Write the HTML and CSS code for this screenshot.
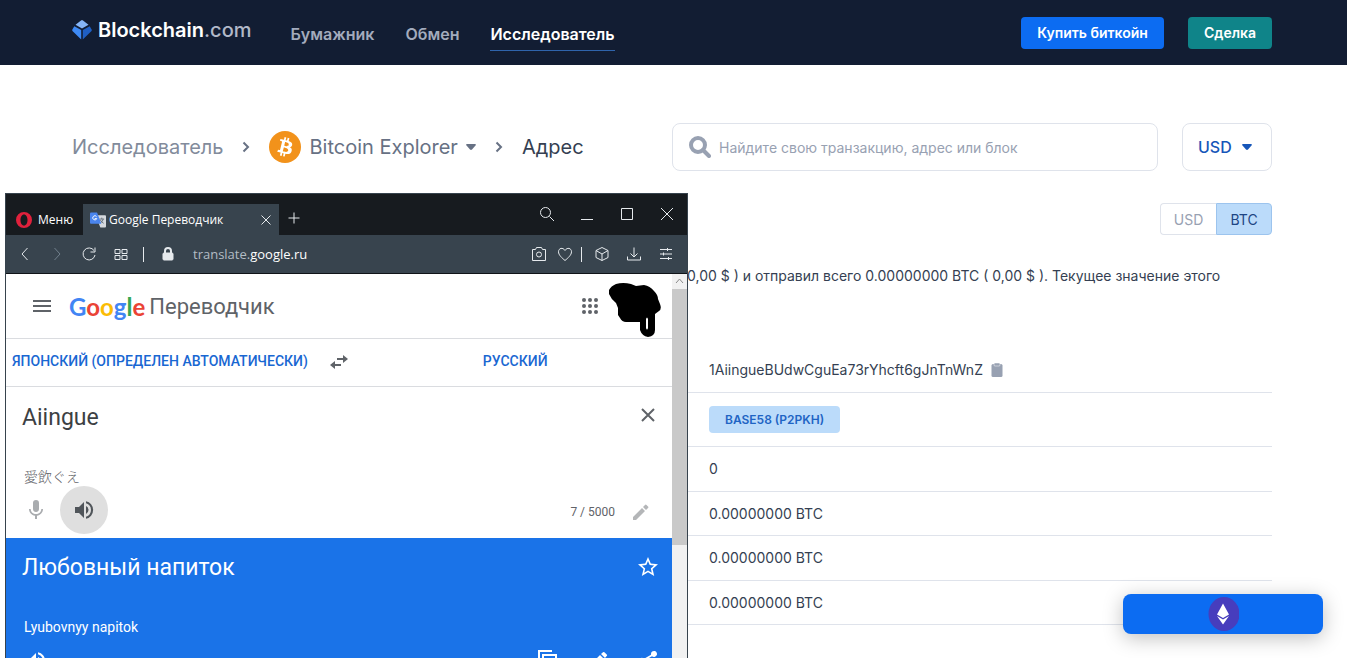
FILE: index.html
```html
<!DOCTYPE html>
<html lang="ru">
<head>
<meta charset="utf-8">
<title>Blockchain.com</title>
<link rel="stylesheet" href="styles.css">
</head>
<body>
<header class="topbar">
  <a class="brand" href="#">
    <svg class="brand-mark" viewBox="0 0 20 20" aria-hidden="true">
      <path fill="#85b5f8" d="M9 .5q1-.8 2 0l5.500 4.300L10 8.600 3.500 4.800z"/>
      <path fill="#3d89f5" d="M2.300 6.200 9.200 10v9.500L.7 11.300q-1-1 0-2.200z"/>
      <path fill="#1f5fc4" d="M17.700 6.200 10.800 10v9.500l8.500-8.200q1-1 0-2.200z"/>
    </svg>
    <span>Blockchain<span class="brand-tld">.com</span></span>
  </a>
  <nav class="nav">
    <a href="#">Бумажник</a>
    <a href="#">Обмен</a>
    <a class="is-active" href="#">Исследователь</a>
  </nav>
  <div class="actions">
    <button class="btn btn-blue" type="button">Купить биткойн</button>
    <button class="btn btn-teal" type="button">Сделка</button>
  </div>
</header>

<main class="page">
  <div class="tools">
    <nav class="crumbs">
      <a class="crumb-root" href="#">Исследователь</a>
      <svg class="chevron" viewBox="0 0 8 12" aria-hidden="true"><path d="M1.500 1.500 6 6l-4.500 4.500"/></svg>
      <a class="crumb-coin" href="#">
        <svg class="coin" viewBox="0 0 32 32" aria-hidden="true">
          <circle cx="16" cy="16" r="16" fill="#f2921b"/>
          <path fill="#fff" fill-rule="evenodd" d="M23.200 14c.3-2.100-1.300-3.200-3.500-4l.7-2.800-1.700-.4-.7 2.700-1.400-.3.700-2.800-1.700-.4-.7 2.800-3.500-.9-.4 1.800s1.300.3 1.200.3c.7.200.8.600.8 1l-1.900 7.700c-.1.200-.3.500-.8.400l-1.200-.3-.9 2 3.400.8-.7 2.900 1.700.4.7-2.800 1.400.3-.7 2.800 1.700.4.700-2.800c3 .6 5.200.3 6.100-2.300.8-2.200 0-3.400-1.600-4.200 1.200-.3 2-1 2.300-2.300zm-4 5.600c-.5 2.200-4.200 1-5.400.7l1-3.900c1.200.3 5 .9 4.400 3.200zm.5-5.600c-.5 1.900-3.600.9-4.500.7l.9-3.600c1 .3 4.200.7 3.600 2.900z"/>
        </svg>
        <span>Bitcoin Explorer</span>
        <svg class="caret" viewBox="0 0 10 6" aria-hidden="true"><path d="M1 0h8q1.500.3.500 1.500L6 5.500q-1 .8-2 0L.5 1.500Q-.5.300 1 0z"/></svg>
      </a>
      <svg class="chevron" viewBox="0 0 8 12" aria-hidden="true"><path d="M1.500 1.500 6 6l-4.500 4.500"/></svg>
      <span class="crumb-here">Адрес</span>
    </nav>
    <label class="search">
      <svg class="search-icon" viewBox="0 0 22 22" aria-hidden="true"><circle cx="9" cy="9" r="7"/><path d="m14 14 6 6"/></svg>
      <input type="search" aria-label="Поиск" placeholder="Найдите свою транзакцию, адрес или блок">
    </label>
    <button class="currency" type="button">USD
      <svg class="caret" viewBox="0 0 10 6" aria-hidden="true"><path d="M1 0h8q1.500.3.500 1.500L6 5.500q-1 .8-2 0L.5 1.500Q-.5.300 1 0z"/></svg>
    </button>
  </div>

  <div class="units">
    <button class="unit" type="button">USD</button>
    <button class="unit is-on" type="button">BTC</button>
  </div>

  <p class="summary">0,00 $ ) и отправил всего 0.00000000 BTC ( 0,00 $ ). Текущее значение этого</p>

  <table class="details">
    <tbody>
      <tr><td class="gap"></td><td><span class="address">1AiingueBUdwCguEa73rYhcft6gJnTnWnZ
        <svg class="clip" viewBox="0 0 12 14" aria-hidden="true"><rect x="0.500" y="1" width="11" height="13" rx="1.500"/><rect class="clip-top" x="3" y="0" width="6" height="3" rx="1"/></svg></span></td></tr>
      <tr class="tall"><td class="gap"></td><td><span class="tag">BASE58 (P2PKH)</span></td></tr>
      <tr><td class="gap"></td><td>0</td></tr>
      <tr><td class="gap"></td><td>0.00000000 BTC</td></tr>
      <tr><td class="gap"></td><td>0.00000000 BTC</td></tr>
      <tr><td class="gap"></td><td>0.00000000 BTC</td></tr>
    </tbody>
  </table>
</main>

<button class="float-cta" type="button" aria-label="Ethereum">
  <svg viewBox="0 0 32 34" aria-hidden="true">
    <ellipse cx="17" cy="17" rx="15.500" ry="17" fill="#473dbd"/>
    <path fill="#fff" d="M16 6.500 22 17.500l-6 3.500-6-3.500zM10 19l6 3.500 6-3.500-6 8.500z"/>
  </svg>
</button>

<section class="window" aria-label="Google Переводчик">
  <div class="titlebar">
    <button class="opera" type="button">
      <svg viewBox="0 0 16 16" aria-hidden="true"><path fill="#e0213c" fill-rule="evenodd" d="M8 0a8 8 0 1 0 0 16A8 8 0 1 0 8 0zm0 2.500c2.200 0 3.500 2.500 3.500 5.500S10.200 13.500 8 13.500 4.500 11 4.500 8 5.800 2.500 8 2.500z"/></svg>
      <span>Меню</span>
    </button>
    <div class="tab">
      <svg class="tab-icon" viewBox="0 0 17 16" aria-hidden="true">
        <path fill="#d5d9de" d="M6 3h10q1 0 1 1v11q0 1-1 1h-5z"/>
        <path fill="none" stroke="#66717c" d="M10 7h5M12.500 5.500V7M14 7q-.5 3-3 4M11 8q1.500 2.500 3.500 3.500"/>
        <path fill="#4a85ee" d="M1 0h6.500L12 12H1q-1 0-1-1V1q0-1 1-1z"/>
        <path fill="none" stroke="#fff" d="M7 4.500A2.200 2.200 0 1 0 7.200 6.500H5"/>
      </svg>
      <span class="tab-name">Google Переводчик</span>
      <svg class="tab-close line" viewBox="0 0 12 12" aria-hidden="true"><path d="m1.500 1.500 9 9m0-9-9 9"/></svg>
    </div>
    <button class="tab-add" type="button" aria-label="Новая вкладка"><svg class="line" viewBox="0 0 12 12"><path d="M6 .5v11M.5 6h11"/></svg></button>
    <div class="win-controls">
      <svg class="line" viewBox="0 0 16 16"><circle cx="6.500" cy="6.500" r="5"/><path d="m10.500 10.500 4.500 4.500"/></svg>
      <svg class="line" viewBox="0 0 16 16"><path d="M2 13.500h12"/></svg>
      <svg class="line" viewBox="0 0 16 16"><path d="M2.500 2.500h11v11h-11z"/></svg>
      <svg class="line" viewBox="0 0 16 16"><path d="m2 2 12 12m0-12L2 14"/></svg>
    </div>
  </div>

  <div class="toolbar">
    <div class="tool-left">
      <svg class="line" viewBox="0 0 16 16"><path d="M10.500 2 5 8l5.500 6"/></svg>
      <svg class="line dim" viewBox="0 0 16 16"><path d="M5.500 2 11 8l-5.500 6"/></svg>
      <svg class="line" viewBox="0 0 16 16"><path d="M13 4.500A6 6 0 1 0 14 9M14 1.500V6H9.500"/></svg>
      <svg class="line" viewBox="0 0 16 16"><path d="M2 3.500h5v4H2zM9 3.500h5v4H9zM2 9.500h5v4H2zM9 9.500h5v4H9z"/></svg>
    </div>
    <span class="divider"></span>
    <svg class="lock" viewBox="0 0 12 14" aria-hidden="true"><rect x="1" y="6" width="10" height="7" rx="1"/><path d="M3 7V4a3 3 0 0 1 6 0v3"/></svg>
    <span class="url">translate.<b>google.ru</b></span>
    <div class="tool-right">
      <svg class="line" viewBox="0 0 16 16"><path d="M1.500 3.500h3l1-2h5l1 2h3v11h-13z"/><circle cx="8" cy="8.500" r="2.500"/></svg>
      <svg class="line" viewBox="0 0 16 16"><path d="M8 14.500C5 12 1.500 9 1.500 5.800 1.500 2 6 1 8 4.500 10 1 14.500 2 14.500 5.800 14.500 9 11 12 8 14.500z"/></svg>
      <span class="divider"></span>
      <svg class="line" viewBox="0 0 16 16"><path d="m8 1.500 6 3v7l-6 3-6-3v-7zM2 4.500l6 3.500 6-3.500M8 8v6.500"/></svg>
      <svg class="line" viewBox="0 0 16 16"><path d="M8 1.500v9M4.500 7.500 8 11l3.500-3.500M1.500 10.500v3.500h13v-3.500"/></svg>
      <svg class="line" viewBox="0 0 16 16"><path d="M2 3.500h12M2 8h12M2 12.500h12M9.500 2v3M5.500 6.500v3M10.500 11v3"/></svg>
    </div>
  </div>

  <div class="viewport">
    <div class="translate">
      <div class="g-head">
        <svg class="burger" viewBox="0 0 18 12" aria-hidden="true"><path d="M0 1h18M0 6h18M0 11h18"/></svg>
        <span class="g-logo" aria-label="Google"><i class="b">G</i><i class="r">o</i><i class="y">o</i><i class="b">g</i><i class="g">l</i><i class="r">e</i></span>
        <span class="g-name">Переводчик</span>
        <svg class="apps" viewBox="0 0 16 16" aria-hidden="true">
          <circle cx="2" cy="2" r="2"/><circle cx="8" cy="2" r="2"/><circle cx="14" cy="2" r="2"/>
          <circle cx="2" cy="8" r="2"/><circle cx="8" cy="8" r="2"/><circle cx="14" cy="8" r="2"/>
          <circle cx="2" cy="14" r="2"/><circle cx="8" cy="14" r="2"/><circle cx="14" cy="14" r="2"/>
        </svg>
        <svg class="scribble" viewBox="0 0 52 54" aria-hidden="true">
          <path fill-rule="evenodd" d="M0 7Q2 3 7 1q7-2 15 0l5 2 8-1q6 1 10 6 4 4 4 8l2 5q2 5-1 7l-4 3v16q0 6-7 7-6-1-8-7V39H17q-4 0-6-4l-2-3v-7l-2-5q-5-4-7-9zM37 36v9q1 3 2 0v-9q-1-3-2 0z"/>
        </svg>
      </div>
      <div class="g-langs">
        <button class="lang" type="button">ЯПОНСКИЙ (ОПРЕДЕЛЕН АВТОМАТИЧЕСКИ)</button>
        <svg class="swap" viewBox="0 0 18 14" aria-hidden="true"><path d="M7 3h6V0l5 4-5 4V5H7zM11 9H5V6l-5 4 5 4v-3h6z"/></svg>
        <button class="lang lang-to" type="button">РУССКИЙ</button>
      </div>
      <div class="source">
        <div class="line-row">
          <span class="phrase">Aiingue</span>
          <svg class="clear" viewBox="0 0 14 14" aria-hidden="true"><path d="m1 1 12 12m0-12L1 13"/></svg>
        </div>
        <div class="reading" lang="ja">愛飲ぐえ</div>
        <div class="source-tools">
          <svg class="mic" viewBox="0 0 24 24" aria-hidden="true"><path d="M12 14c1.700 0 3-1.300 3-3V5a3 3 0 0 0-6 0v6c0 1.700 1.300 3 3 3zm5.300-3c0 3-2.500 5.100-5.300 5.100S6.700 14 6.700 11H5c0 3.400 2.700 6.200 6 6.700V21h2v-3.300c3.300-.5 6-3.300 6-6.700z"/></svg>
          <button class="speak" type="button" aria-label="Прослушать"><svg viewBox="0 0 24 24"><path d="M3 9v6h4l5 5V4L7 9zm13.500 3A4.500 4.500 0 0 0 14 8v8a4.500 4.500 0 0 0 2.500-4zM14 3.200v2.100a7 7 0 0 1 0 13.400v2.100a9 9 0 0 0 0-17.600z"/></svg></button>
          <span class="count">7 / 5000</span>
          <svg class="pencil" viewBox="0 0 18 18" aria-hidden="true"><path d="M1 14v3h3l9-9-3-3zM11 4l3 3 2-2q.8-.8 0-1.500L14.500 2Q13.800 1.200 13 2z"/></svg>
        </div>
      </div>
      <div class="result">
        <div class="line-row">
          <span class="phrase">Любовный напиток</span>
          <svg class="star" viewBox="0 0 24 24" aria-hidden="true"><path d="m22 9.200-7.200-.6L12 2 9.200 8.600 2 9.200l5.500 4.800L5.800 21l6.200-3.700 6.200 3.700-1.600-7zM12 15.400l-3.800 2.300 1-4.300-3.300-2.900 4.400-.4L12 6.100l1.700 4 4.400.4-3.300 2.900 1 4.300z"/></svg>
        </div>
        <div class="translit">Lyubovnyy napitok</div>
        <div class="result-tools">
          <svg viewBox="0 0 24 24" aria-hidden="true"><path d="M3 9v6h4l5 5V4L7 9zm13.500 3A4.500 4.500 0 0 0 14 8v8a4.500 4.500 0 0 0 2.500-4zM14 3.200v2.100a7 7 0 0 1 0 13.400v2.100a9 9 0 0 0 0-17.600z"/></svg>
          <span class="push"></span>
          <svg viewBox="0 0 24 24" aria-hidden="true"><path d="M16 1H2v16h2V3h12zM21 5H6v18h15zm-2 16H8V7h11z"/></svg>
          <svg viewBox="0 0 24 24" aria-hidden="true"><path d="M3 17.200V21h3.800L18 9.900 14 6zM20.700 7q.8-.8 0-1.500l-2.300-2.200q-.7-.7-1.400 0L15 5l4 4z"/></svg>
          <svg viewBox="0 0 24 24" aria-hidden="true"><path d="M18 16q-1.200 0-2 .8l-7.100-4.200v-1.300L16 7.200A3 3 0 1 0 15 5v.7L8 9.800A3 3 0 1 0 8 14.200l7 4.200A3 3 0 1 0 18 16z"/></svg>
        </div>
      </div>
    </div>
    <div class="scroll">
      <svg class="scroll-up" viewBox="0 0 15 15" aria-hidden="true"><path d="m4 9 3.500-4L11 9"/></svg>
      <div class="thumb"></div>
    </div>
  </div>
</section>
</body>
</html>
```
FILE: styles.css
```css
* { box-sizing: border-box; }

body {
  margin: 0;
  height: 100vh;
  overflow: hidden;
  background: #fff;
  color: #353f52;
  font-family: Inter, "Liberation Sans", sans-serif;
}

a { color: inherit; text-decoration: none; }
button { padding: 0; border: 0; background: none; color: inherit; font: inherit; }
svg { display: block; flex: none; }

.topbar {
  display: flex;
  align-items: center;
  height: 65px;
  padding: 0 75px 0 72px;
  background: #121d33;
}
.brand {
  display: flex;
  align-items: center;
  gap: 6px;
  margin-bottom: 6px;
  color: #fff;
  font-size: 20px;
  font-weight: 600;
}
.brand-mark { width: 20px; height: 20px; }
.brand-tld { color: #b1b8c8; font-weight: 500; }
.nav {
  display: flex;
  gap: 31px;
  margin-left: 39px;
  padding-top: 3px;
  color: #a3abbd;
  font-size: 16px;
  font-weight: 600;
}
.nav a { padding: 4px 0; line-height: 24px; border-bottom: 1px solid transparent; }
.nav .is-active { color: #fff; border-color: #2f64ac; }
.actions { display: flex; gap: 24px; margin-left: auto; }
.btn {
  height: 32px;
  padding: 0 16px;
  border-radius: 4px;
  color: #fff;
  font-size: 14px;
  font-weight: 600;
}
.btn-blue { background: #0c6cf2; }
.btn-teal { background: #0f8489; }

.page { padding: 58px 75px 0 72px; }
.tools { display: flex; align-items: center; gap: 24px; }
.crumbs {
  display: flex;
  align-items: center;
  flex: 1;
  font-size: 20px;
}
.crumb-root { color: #828b9b; }
.chevron { width: 8px; height: 12px; margin: 0 19px; fill: none; stroke: #677184; stroke-width: 2; }
.crumb-coin { display: flex; align-items: center; gap: 8px; color: #677184; }
.coin { width: 32px; height: 32px; }
.caret { width: 10px; height: 6px; fill: currentColor; }
.crumb-here { color: #353f52; }
.search {
  display: flex;
  align-items: center;
  gap: 8px;
  width: 486px;
  height: 48px;
  padding: 0 16px;
  border: 1px solid #dfe3eb;
  border-radius: 8px;
}
.search-icon { width: 22px; height: 22px; fill: none; stroke: #98a1b2; stroke-width: 4; stroke-linecap: round; }
.search input {
  flex: 1;
  min-width: 0;
  padding: 0;
  border: 0;
  outline: 0;
  background: none;
  font: 14px Inter, sans-serif;
}
.search input::placeholder { color: #98a1b2; }
.currency {
  display: flex;
  align-items: center;
  gap: 10px;
  width: 90px;
  height: 48px;
  padding-left: 15px;
  border: 1px solid #dfe3eb;
  border-radius: 8px;
  color: #1656b9;
  font-size: 16px;
  font-weight: 500;
}
.units { display: flex; justify-content: flex-end; margin-top: 32px; }
.unit {
  width: 56px;
  height: 32px;
  border: 1px solid #dfe3eb;
  border-right: 0;
  border-radius: 4px 0 0 4px;
  color: #98a1b2;
  font-size: 14px;
}
.unit.is-on {
  border: 1px solid #9cc4ee;
  border-radius: 0 4px 4px 0;
  background: #bbdbfa;
  color: #1d4583;
}
.summary { margin: 29px 0 0; padding-left: 615px; font-size: 14px; line-height: 24px; white-space: nowrap; }
.details { width: 100%; margin-top: 60px; border-collapse: collapse; font-size: 14px; }
.details td { height: 44px; padding: 0; border-bottom: 1px solid #dfe3eb; }
.details tr:nth-child(2n + 3) td { height: 45px; }
.details .tall td { height: 54px; }
.details .gap { width: 637px; }
.address { display: flex; align-items: center; gap: 8px; }
.clip { width: 12px; height: 14px; fill: #98a1b2; }
.clip-top { stroke: #fff; stroke-width: 0.500; }
.tag {
  display: inline-block;
  padding: 0 16px;
  border-radius: 4px;
  background: #bbdbfa;
  color: #1f64c4;
  font-size: 12px;
  font-weight: 600;
  line-height: 27px;
}
.float-cta {
  position: absolute;
  right: 24px;
  bottom: 24px;
  display: flex;
  align-items: center;
  justify-content: center;
  width: 200px;
  height: 40px;
  border-radius: 8px;
  background: #0c6cf2;
  box-shadow: 0 4px 20px rgba(0, 0, 0, 0.25);
}
.float-cta svg { width: 32px; height: 34px; }

.window {
  position: absolute;
  top: 193px;
  bottom: 0;
  left: 5px;
  display: flex;
  flex-direction: column;
  width: 683px;
  border: 1px solid #37434d;
  border-bottom: 0;
  background: #fff;
  color: #fff;
  font-family: "Open Sans", "Noto Sans", sans-serif;
  overflow: hidden;
}
.line { width: 16px; height: 16px; fill: none; stroke: #e6eaed; }
.titlebar { display: flex; align-items: flex-end; flex: none; height: 41px; background: #171b1f; }
.opera { display: flex; align-items: center; gap: 6px; height: 31px; padding: 0 10px; font-size: 12px; }
.opera svg { width: 16px; height: 16px; }
.tab {
  display: flex;
  align-items: center;
  gap: 3px;
  width: 196px;
  height: 31px;
  padding: 0 7px;
  background: #38444e;
  font-size: 12px;
}
.tab-icon { width: 16px; height: 16px; }
.tab-close { width: 12px; height: 12px; margin-left: auto; }
.tab-add { display: flex; align-items: center; height: 35px; margin-left: 9px; }
.tab-add svg { width: 12px; height: 12px; }
.win-controls { display: flex; gap: 24px; margin-left: auto; padding: 0 12px 13px 0; }
.toolbar {
  display: flex;
  align-items: center;
  flex: none;
  height: 39px;
  border-bottom: 1px solid #101418;
  background: #38444e;
}
.tool-left { display: flex; gap: 16px; padding: 0 14px 0 11px; }
.dim { stroke: #71808c; }
.divider { width: 1px; height: 15px; background: #e6eaed; }
.lock { width: 12px; height: 14px; margin: 0 19px 0 18px; fill: #e6eaed; stroke: #e6eaed; }
.lock path { fill: none; stroke-width: 2; }
.url { color: #b3bcc4; font-size: 13px; }
.url b { color: #fff; font-weight: 400; }
.tool-right { display: flex; align-items: center; gap: 16px; margin-left: auto; padding-right: 13px; }
.tool-right .line:nth-child(2) { margin: 0 -8px 0 -6px; }
.tool-right .divider { margin-right: -4px; }

.viewport { display: flex; flex: 1; min-height: 0; }
.translate { display: flex; flex-direction: column; flex: 1; color: #3c4043; font-family: Roboto, sans-serif; }
.g-head {
  display: flex;
  align-items: center;
  flex: none;
  height: 65px;
  padding: 0 11px 0 27px;
  border-bottom: 1px solid #dadce0;
}
.burger { width: 18px; height: 12px; margin-right: 18px; fill: none; stroke: #5f6368; stroke-width: 2; }
.g-logo { margin-right: 4px; font: 700 24px Lato, sans-serif; }
.g-logo i { font-style: normal; }
.b { color: #4285f4; }
.r { color: #ea4335; }
.y { color: #fbbc05; }
.g { color: #34a853; }
.g-name { color: #5f6368; font-size: 22px; }
.apps { width: 16px; height: 16px; margin-left: auto; fill: #5f6368; }
.scribble { width: 52px; height: 54px; margin: 8px 0 0 11px; }
.g-langs { display: flex; align-items: center; flex: none; height: 48px; padding: 0 0 3px 6px; border-bottom: 1px solid #dadce0; }
.lang { color: #1967d2; font-size: 14px; font-weight: 500; }
.swap { width: 18px; height: 14px; margin: 2px 135px 0 22px; fill: #5f6368; }
.source { flex: none; height: 151px; padding: 0 16px; }
.line-row { display: flex; align-items: center; justify-content: space-between; height: 60px; font-size: 23px; }
.clear { width: 14px; height: 14px; margin: 0 1px 4px 0; fill: none; stroke: #5f6368; stroke-width: 2; }
.reading { margin-top: 19px; padding-left: 2px; color: #5f6368; font: 300 14px/20px "Noto Sans CJK JP", sans-serif; }
.source-tools { display: flex; align-items: center; height: 48px; padding: 0 6px 0 2px; }
.mic { width: 24px; height: 24px; fill: #a9acaf; }
.speak { display: flex; align-items: center; justify-content: center; width: 48px; height: 48px; margin-left: 12px; border-radius: 50%; background: #dfdfdf; }
.speak svg { width: 24px; height: 24px; fill: #50555a; }
.count { margin: 4px 0 0 auto; color: #5f6368; font-size: 12px; }
.pencil { width: 18px; height: 18px; margin: 4px 0 0 17px; fill: #b4b6b8; }
.result { flex: 1; padding: 0 12px 0 16px; background: #1a73e8; color: #fff; }
.result .line-row { height: 58px; }
.star { width: 24px; height: 24px; fill: #fff; }
.translit { margin-top: 21px; padding-left: 2px; font-size: 14px; line-height: 20px; }
.result-tools { display: flex; gap: 26px; margin: 12px 0 0 2px; }
.result-tools svg { width: 24px; height: 24px; fill: #fff; }
.push { flex: 1; }
.scroll { width: 15px; background: #f1f1f1; }
.scroll-up { width: 15px; height: 15px; fill: none; stroke: #8b8b8b; }
.thumb { height: 256px; background: #c9c9c9; }
```
